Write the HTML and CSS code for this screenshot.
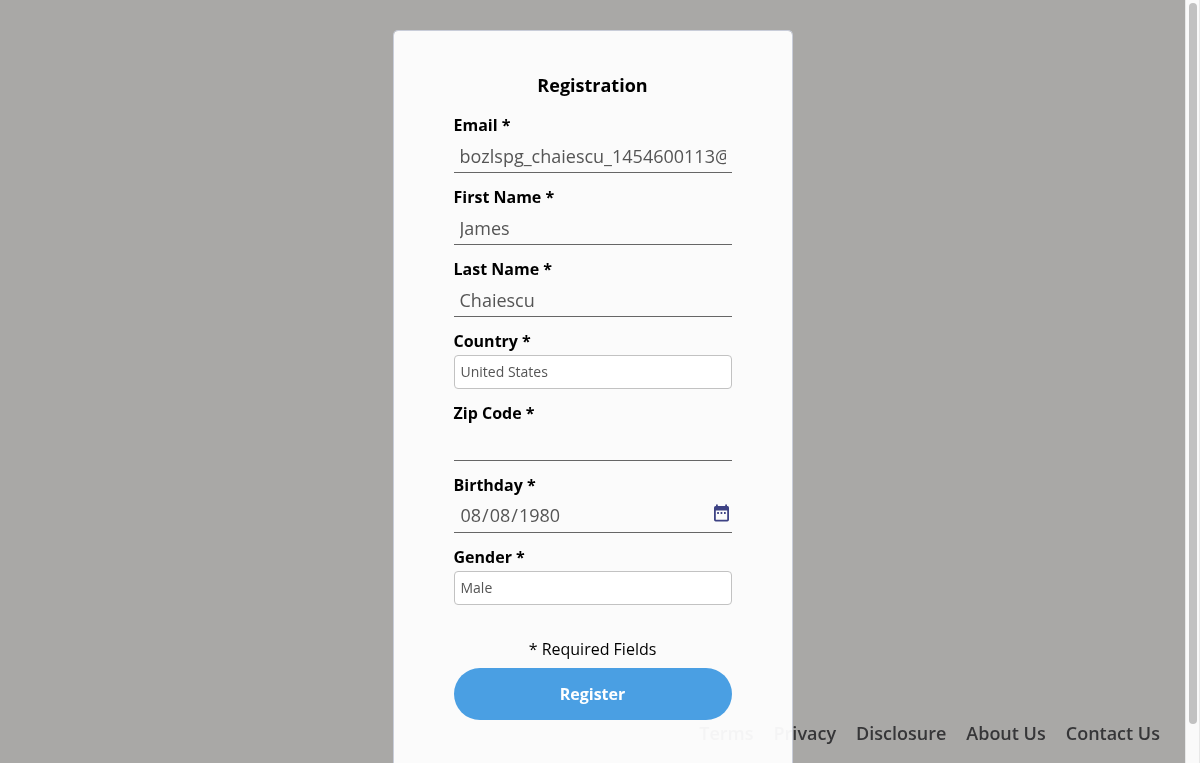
FILE: index.html
```html
<!DOCTYPE html>
<html lang="en">
<head>
<meta charset="utf-8">
<title>Registration</title>
<link rel="stylesheet" href="styles.css">
</head>
<body>
<div class="page">
  <main class="main">
    <form class="card">
      <h1 class="title">Registration</h1>
      <div class="field"><label class="label" for="email">Email *</label><input class="input" id="email" type="text" value="bozlspg_chaiescu_1454600113@mail.com"></div>
      <div class="field"><label class="label" for="first">First Name *</label><input class="input" id="first" type="text" value="James"></div>
      <div class="field"><label class="label" for="last">Last Name *</label><input class="input" id="last" type="text" value="Chaiescu"></div>
      <div class="field"><label class="label" for="country">Country *</label><select class="select" id="country"><option>United States</option></select></div>
      <div class="field"><label class="label" for="zip">Zip Code *</label><input class="input" id="zip" type="text"></div>
      <div class="field"><span class="label">Birthday *</span>
        <div class="date"><span class="date-text">08<i class="slash">/</i>08<i class="slash">/</i>1980</span>
          <svg class="calendar" width="17" height="18" viewBox="0 0 17 18"><path fill="#3d4284" fill-rule="evenodd" d="M3 .4h1.800V2h7.400V.4H14V2h.5A1.800 1.800 0 0 1 16 3.800V15.700A1.800 1.800 0 0 1 14.300 17.400H2.700A1.800 1.800 0 0 1 1 15.700V3.800A1.800 1.800 0 0 1 2.700 2H3zM2.800 6.400v9.300h11.400V6.400zM4.200 8h1.700v2H4.200zM7.600 8h1.700v2H7.600zM11 8h1.700v2H11z"/></svg>
        </div>
      </div>
      <div class="field"><label class="label" for="gender">Gender *</label><select class="select" id="gender"><option>Male</option></select></div>
      <p class="required">* Required Fields</p>
      <button class="register" type="button">Register</button>
    </form>
  </main>
  <div class="scrollbar"><div class="thumb"></div></div>
</div>
<nav class="footer"><a>Terms</a><a>Privacy</a><a>Disclosure</a><a>About Us</a><a>Contact Us</a></nav>
</body>
</html>
```
FILE: styles.css
```css
* { box-sizing: border-box; }
body { margin: 0; height: 763px; overflow: hidden; background: #a9a8a6; font-family: "Open Sans", sans-serif; color: #000; }
.page { display: flex; height: 763px; }
.main { position: relative; z-index: 1; flex: 1; display: flex; justify-content: center; align-items: stretch; padding-top: 30px; }
.card { width: 400px; padding: 42px 60px 0; border: 1px solid #c9cdd9; border-bottom: 0; border-radius: 5px 5px 0 0; background: rgba(255, 255, 255, .95); background-clip: padding-box; }
.title { margin: 0; height: 40px; line-height: 24px; font-size: 18px; font-weight: 700; text-align: center; }
.field { height: 72px; }
.label { display: block; height: 28px; padding-bottom: 4px; line-height: 24px; font-size: 16px; font-weight: 700; }
.input { display: block; width: 100%; height: 32px; padding: 0 6px 2px; border: 0; border-bottom: 1px solid #666; border-radius: 0; outline: 0; background: none; font: 18px "Open Sans", sans-serif; color: #555; }
.select { display: block; appearance: none; width: 100%; height: 34px; margin-top: -2px; padding: 0 6px 2px; border: 1px solid #c2c2c2; border-radius: 4px; background: #fff; font: 14px "Open Sans", sans-serif; color: #555; opacity: 1; }
.date { display: flex; justify-content: space-between; height: 32px; padding: 0 2px 0 7px; border-bottom: 1px solid #666; font-size: 18px; line-height: 28px; color: #555; }
.slash { padding: 0 1px; font-style: normal; }
.calendar { margin-top: 3px; }
.required { margin: 20px 0 7px; line-height: 24px; font-size: 16px; text-align: center; }
.register { display: block; width: 100%; height: 52px; border: 0; border-radius: 26px; background: #4a9fe3; color: #fff; font: 700 16px "Open Sans", sans-serif; }
.scrollbar { position: relative; z-index: 2; width: 15px; padding: 3px 3px 0; border-left: 1px solid #e8e8e8; border-right: 1px solid #e8e8e8; background: #fafafa; }
.thumb { width: 8px; height: 721px; border-radius: 4px; background: #c1c1c1; }
.footer { position: fixed; right: 40px; bottom: 17px; display: flex; gap: 20px; font-size: 18px; line-height: 25px; font-weight: 580; color: #363638; }
```
